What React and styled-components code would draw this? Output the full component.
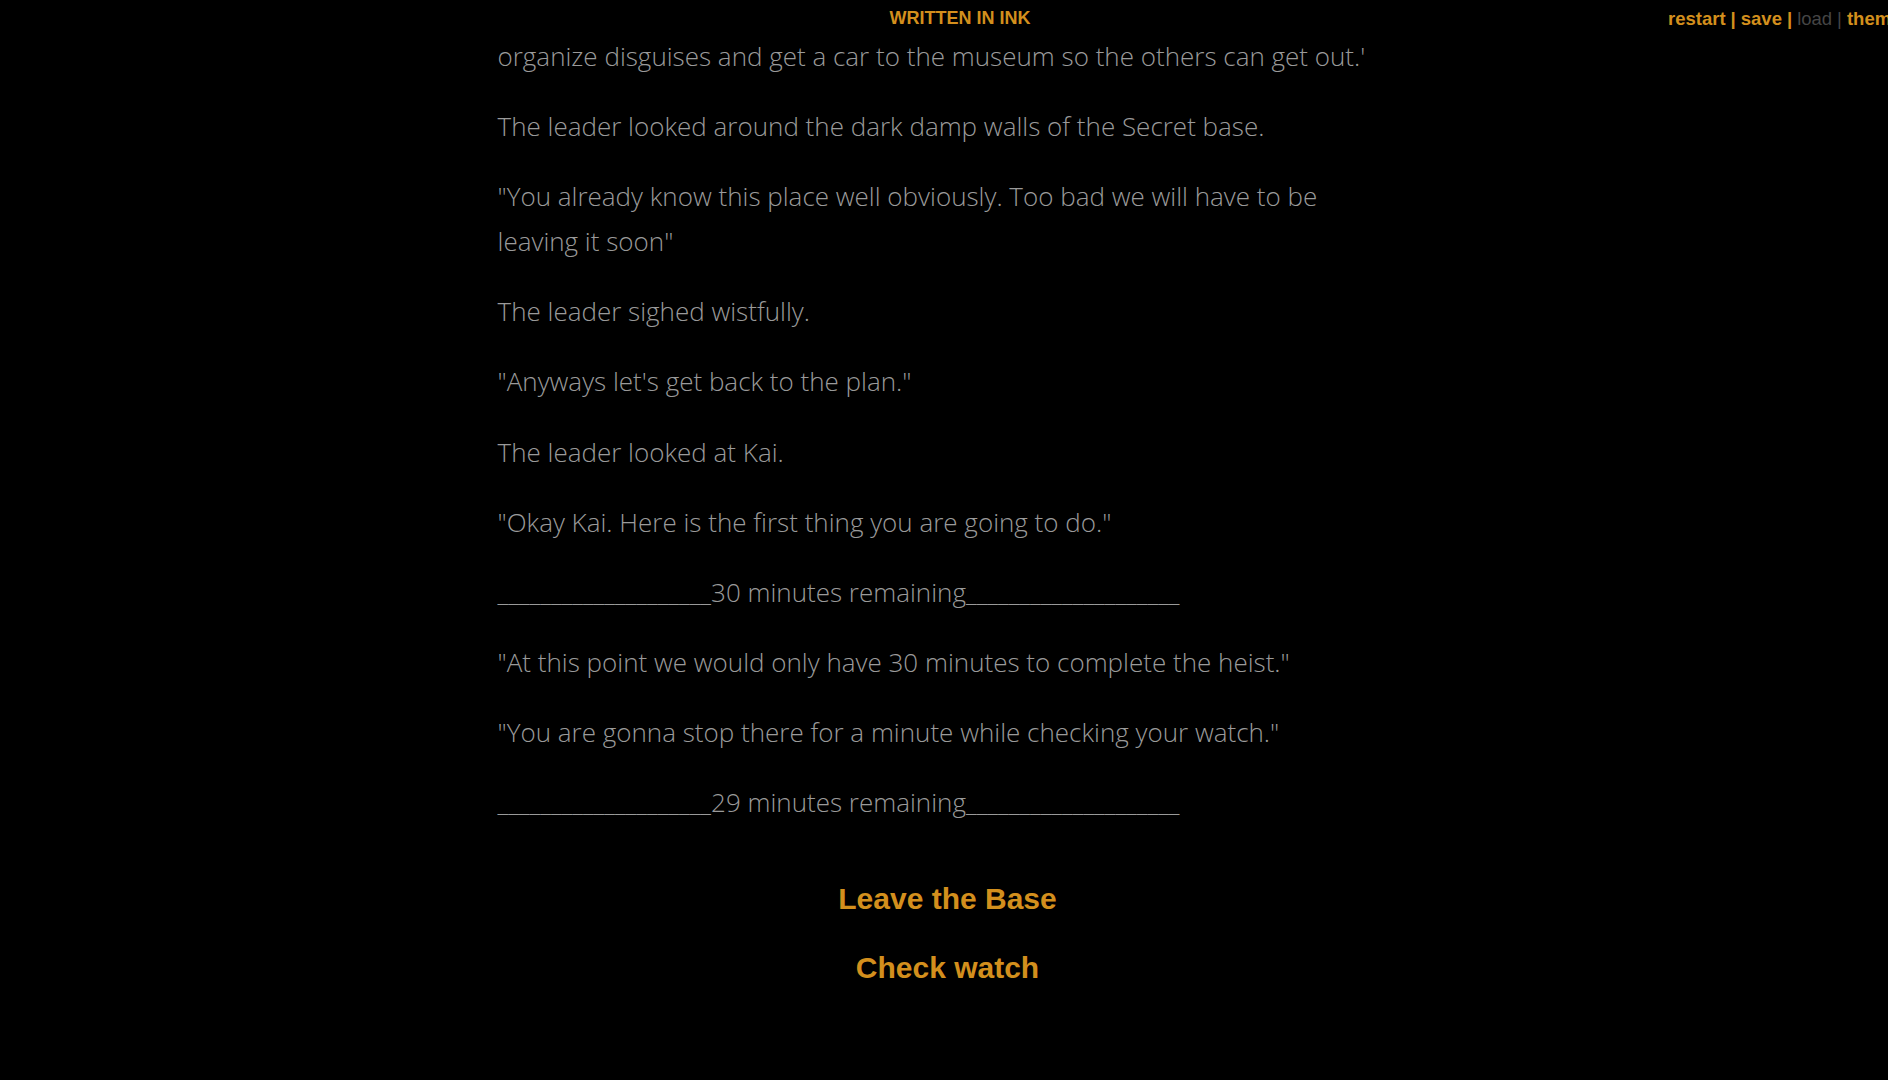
import React from 'react';
import styled, { createGlobalStyle } from 'styled-components';

const GlobalStyle = createGlobalStyle`
  html, body {
    margin: 0;
    padding: 0;
    background: #000;
    overflow: hidden;
  }
  body {
    font-family: 'Open Sans', 'DejaVu Sans', sans-serif;
  }
`;

const rule = '_'.repeat(20);

const paragraphs = [
  "organize disguises and get a car to the museum so the others can get out.'",
  'The leader looked around the dark damp walls of the Secret base.',
  '"You already know this place well obviously. Too bad we will have to be leaving it soon"',
  'The leader sighed wistfully.',
  '"Anyways let\'s get back to the plan."',
  'The leader looked at Kai.',
  '"Okay Kai. Here is the first thing you are going to do."',
  `${rule}30 minutes remaining${rule}`,
  '"At this point we would only have 30 minutes to complete the heist."',
  '"You are gonna stop there for a minute while checking your watch."',
  `${rule}29 minutes remaining${rule}`,
];

const choices = ['Leave the Base', 'Check watch'];

const App = () => {
  return (
    <>
      <GlobalStyle />
      <Page>
        <Header>
          <Title>WRITTEN IN INK</Title>
          <Controls>
            <ControlLink>restart</ControlLink>
            <Sep>|</Sep>
            <ControlLink>save</ControlLink>
            <Sep>|</Sep>
            <ControlLink disabled>load</ControlLink>
            <Sep disabled>|</Sep>
            <ControlLink>theme</ControlLink>
          </Controls>
        </Header>

        <Story>
          {paragraphs.map((text, i) => (
            <Para key={i}>{text}</Para>
          ))}
          <Choices>
            {choices.map((c) => (
              <Choice key={c}>
                <ChoiceLink href="#">{c}</ChoiceLink>
              </Choice>
            ))}
          </Choices>
        </Story>
      </Page>
    </>
  );
};

const Page = styled.div`
  position: relative;
  width: 1888px;
  height: 1080px;
  background: #000;
`;

const Header = styled.header`
  height: 34px;
  display: flex;
  align-items: center;
  justify-content: center;
  padding-left: 32px;
  padding-top: 3px;
  box-sizing: border-box;
`;

const Title = styled.h1`
  margin: 0;
  font-family: 'Liberation Sans', Arial, sans-serif;
  font-weight: 700;
  font-size: 18px;
  color: #d38f1d;
`;

const Controls = styled.nav`
  position: absolute;
  top: 8px;
  left: 1668px;
  display: flex;
  gap: 5px;
  white-space: nowrap;
  font-family: 'Liberation Sans', Arial, sans-serif;
  font-size: 18.5px;
  line-height: 22px;
`;

const ControlLink = styled.span`
  color: ${(p) => (p.disabled ? '#454545' : '#d38f1d')};
  font-weight: ${(p) => (p.disabled ? 400 : 700)};
`;

const Sep = styled.span`
  color: ${(p) => (p.disabled ? '#454545' : '#d38f1d')};
  font-weight: ${(p) => (p.disabled ? 400 : 700)};
`;

const Story = styled.main`
  width: 900px;
  margin: 0 auto;
  padding-left: 7px;
`;

const Para = styled.p`
  margin: 0 0 25.6px;
  font-size: 26px;
  font-weight: 300;
  line-height: 44.6px;
  color: #9a9a9a;
`;

const Choices = styled.div`
  padding-top: 26px;
`;

const Choice = styled.p`
  margin: 0 0 25px;
  text-align: center;
  font-size: 26px;
  line-height: 44px;
`;

const ChoiceLink = styled.a`
  font-family: 'Liberation Sans', Arial, sans-serif;
  font-weight: 700;
  font-size: 30px;
  line-height: inherit;
  color: #d38f1d;
  text-decoration: none;
`;

export default App;
